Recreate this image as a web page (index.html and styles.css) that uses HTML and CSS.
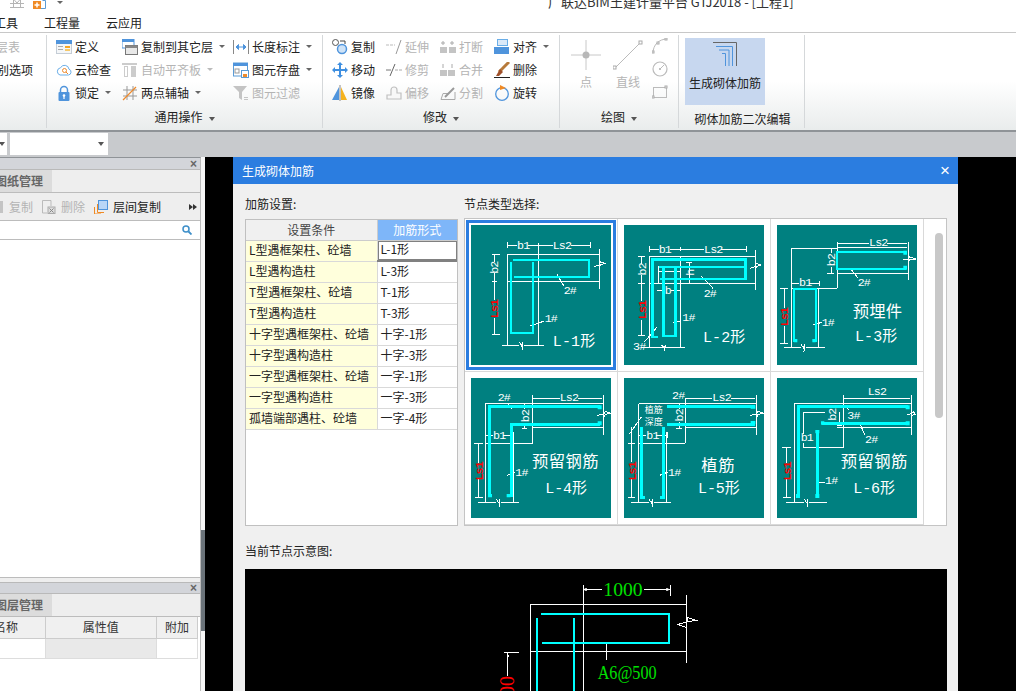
FILE: index.html
```html
<!DOCTYPE html>
<html lang="zh">
<head>
<meta charset="utf-8">
<title>生成砌体加筋</title>
<link rel="stylesheet" href="styles.css">
</head>
<body>
<div class="app">
  <header class="titlebar">
    <svg class="qa qa1" width="14" height="10" viewBox="0 0 14 10"><path d="M0,.5H14M0,4.5H14M0,8.5H14M3.500,0V9M10.500,0V9M3.500,0L7,4L10.500,0" fill="none" stroke="#b5b5b5"/></svg>
    <svg class="qa qa2" width="14" height="10" viewBox="0 0 14 10"><rect x="0" y="1" width="8" height="8" fill="#f08a24"/><path d="M4,2.500V7.500M1.500,5H6.500" stroke="#fff" stroke-width="1.500"/><path d="M9.500,0.500H12.500V8.500H8" fill="none" stroke="#5b9bd5"/></svg>
    <span class="caret qa3"></span>
    <span class="apptitle">广联达BIM土建计量平台 GTJ2018 - [工程1]</span>
  </header>
  <nav class="tabs"><span>工具</span><span>工程量</span><span>云应用</span></nav>

  <section class="ribbon">
    <div class="group g1">
      <div class="clipcol">
        <span class="off">层表</span>
        <span>别选项</span>
        <span>&nbsp;</span>
      </div>
    </div>

    <div class="group g2">
      <div class="cols">
        <div class="col w66">
          <div class="it"><svg class="ic" viewBox="0 0 16 16"><rect x=".5" y="1.500" width="15" height="13" fill="#f4f6f8" stroke="#c5cdd6"/><rect y="1" width="16" height="4" fill="#4f94dc"/><rect x="2" y="7" width="5" height="1" fill="#aaa"/><rect x="2" y="10" width="5" height="1" fill="#aaa"/><rect x="9" y="7" width="5" height="2" fill="#f5a623"/><rect x="9" y="10" width="5" height="2" fill="#f5c86a"/></svg><span>定义</span></div>
          <div class="it"><svg class="ic" viewBox="0 0 16 16"><path d="M4,13H12.500A3,3 0 0 0 13,7.200A4.500,4.500 0 0 0 4.500,5.800A3.700,3.700 0 0 0 4,13Z" fill="#fff" stroke="#6aaee8"/><circle cx="8.500" cy="8.500" r="2" fill="none" stroke="#ee8a2c"/><path d="M10,10L12,12" stroke="#ee8a2c"/></svg><span>云检查</span></div>
          <div class="it"><svg class="ic" viewBox="0 0 16 16"><path d="M4.500,8V5A3.500,3.500 0 0 1 11.500,5V8" fill="none" stroke="#4f94dc" stroke-width="1.500"/><rect x="2.500" y="7" width="11" height="9" rx="1" fill="#4f94dc"/><circle cx="8" cy="10.500" r="1.300" fill="#fff"/><rect x="7.400" y="11" width="1.200" height="3" fill="#fff"/></svg><span>锁定</span><span class="caret"></span></div>
        </div>
        <div class="col w111">
          <div class="it"><svg class="ic" viewBox="0 0 16 16"><rect y="0" width="12" height="9" fill="#fff" stroke="#4f94dc"/><rect y="0" width="12" height="3" fill="#4f94dc"/><rect x="3.500" y="6.500" width="12" height="9" fill="#e8e8e8" stroke="#777"/><rect x="3.500" y="6.500" width="12" height="2.500" fill="#888"/></svg><span>复制到其它层</span><span class="caret"></span></div>
          <div class="it off"><svg class="ic" viewBox="0 0 16 16"><rect x="0" y="1" width="15" height="2" fill="#ccc"/><rect x="2.500" y="4.500" width="3" height="10" fill="#fff" stroke="#ccc"/><rect x="9" y="4" width="5" height="11" fill="#ccc"/></svg><span>自动平齐板</span><span class="caret lite"></span></div>
          <div class="it"><svg class="ic" viewBox="0 0 16 16"><path d="M5,1V15M11,1V15M1,5H15M1,11H15" stroke="#999" fill="none"/><path d="M1,15L14,2" stroke="#ee8a2c" stroke-width="1.200"/></svg><span>两点辅轴</span><span class="caret"></span></div>
        </div>
        <div class="col">
          <div class="it"><svg class="ic" viewBox="0 0 16 16"><path d="M.5,1V15M15.500,1V15" stroke="#888"/><path d="M3,8H13M3,8L5.500,5.500V10.500ZM13,8L10.500,5.500V10.500Z" stroke="#4f94dc" fill="#4f94dc"/></svg><span>长度标注</span><span class="caret"></span></div>
          <div class="it"><svg class="ic" viewBox="0 0 16 16"><rect x=".5" y="1" width="14" height="13" fill="#fff" stroke="#5b9bd5"/><rect y="1" width="15" height="3" fill="#4f94dc"/><rect x="2" y="7" width="4" height="4" fill="none" stroke="#999"/><rect x="8.500" y="8.500" width="7" height="7" fill="#fff" stroke="#5b9bd5"/><rect x="10" y="12" width="4" height="3" fill="#ee8a2c"/></svg><span>图元存盘</span><span class="caret"></span></div>
          <div class="it off"><svg class="ic" viewBox="0 0 16 16"><path d="M0,1H14L9,7V15L6,13V7Z" fill="#c4c4c4"/><rect x="11" y="12" width="4" height="1" fill="#c4c4c4"/><rect x="11" y="14" width="4" height="1" fill="#c4c4c4"/></svg><span>图元过滤</span></div>
        </div>
      </div>
      <div class="glabel"><span>通用操作</span><span class="caret dark"></span></div>
    </div>

    <div class="group g3">
      <div class="cols">
        <div class="col w54">
          <div class="it"><svg class="ic" viewBox="0 0 16 16"><circle cx="3.500" cy="3.500" r="3" fill="#fff" stroke="#555"/><circle cx="10" cy="10" r="4.500" fill="#cfe3f7" stroke="#4f94dc" stroke-width="1.500"/><path d="M8,2H13V5" fill="none" stroke="#444"/></svg><span>复制</span></div>
          <div class="it"><svg class="ic" viewBox="0 0 16 16"><path d="M8,0L11,3H9V7H13V5L16,8L13,11V9H9V13H11L8,16L5,13H7V9H3V11L0,8L3,5V7H7V3H5Z" fill="#3f8fe0"/></svg><span>移动</span></div>
          <div class="it"><svg class="ic" viewBox="0 0 16 16"><path d="M7,2V15H0Z" fill="#4f94dc"/><path d="M9,2V15H15Z" fill="#f5b21e"/><path d="M8,0V16" stroke="#888"/></svg><span>镜像</span></div>
        </div>
        <div class="col w54 off">
          <div class="it"><svg class="ic" viewBox="0 0 16 16"><path d="M0,6H9" stroke="#bbb" stroke-dasharray="3 1"/><path d="M15,1L10,15" stroke="#999"/></svg><span>延伸</span></div>
          <div class="it"><svg class="ic" viewBox="0 0 16 16"><path d="M0,8H5" stroke="#777"/><path d="M9,8H16" stroke="#aaa" stroke-dasharray="3 1"/><path d="M9,2L4,14" stroke="#666"/></svg><span>修剪</span></div>
          <div class="it"><svg class="ic" viewBox="0 0 16 16"><path d="M1,14V10H5V5A3,3 0 0 1 11,5V8H15V14Z" fill="#f8f8f8" stroke="#c0c0c0" stroke-width="1.200"/></svg><span>偏移</span></div>
        </div>
        <div class="col w54 off">
          <div class="it"><svg class="ic" viewBox="0 0 16 16"><rect x="0" y="8" width="7" height="6" fill="#c4c4c4"/><rect x="9" y="8" width="7" height="6" fill="#c4c4c4"/><path d="M3,2V6M1,4H5M12,2V6M10,4H14" stroke="#aaa"/></svg><span>打断</span></div>
          <div class="it"><svg class="ic" viewBox="0 0 16 16"><rect x="0" y="8" width="7" height="6" fill="#c4c4c4"/><rect x="8" y="8" width="7" height="6" fill="#c4c4c4"/><path d="M3,2V6M12,2V6" stroke="#aaa"/></svg><span>合并</span></div>
          <div class="it"><svg class="ic" viewBox="0 0 16 16"><path d="M1,14.500H15V7M1,14.500L3,8.500H9" fill="none" stroke="#aaa"/><path d="M5,12L14,3" stroke="#999" stroke-width="2"/></svg><span>分割</span></div>
        </div>
        <div class="col">
          <div class="it"><svg class="ic" viewBox="0 0 16 16"><rect x="3.500" y=".5" width="10" height="6" fill="#dbe9f8" stroke="#6aaee8"/><rect x="0" y="8" width="15" height="7" fill="#4f94dc"/></svg><span>对齐</span><span class="caret"></span></div>
          <div class="it"><svg class="ic" viewBox="0 0 16 16"><path d="M15,0L5,10" stroke="#b77a3a" stroke-width="3"/><path d="M6,7L9,10L5,14H2Z" fill="#a0502a"/><path d="M0,15.500H16" stroke="#222"/></svg><span>删除</span></div>
          <div class="it"><svg class="ic" viewBox="0 0 16 16"><circle cx="8" cy="9" r="6.300" fill="none" stroke="#4f94dc" stroke-width="1.300"/><path d="M6,0L12,3L6,5Z" fill="#f08a24"/></svg><span>旋转</span></div>
        </div>
      </div>
      <div class="glabel"><span>修改</span><span class="caret dark"></span></div>
    </div>

    <div class="group g4">
      <div class="draw">
        <div class="bigtool">
          <svg width="30" height="30" viewBox="0 0 30 30"><path d="M15,0V30M0,15H30" stroke="#c8c8c8"/><circle cx="15" cy="15" r="3.500" fill="#b8b8b8"/></svg>
          <span>点</span>
        </div>
        <div class="bigtool">
          <svg width="30" height="30" viewBox="0 0 30 30"><path d="M2,28L28,2" stroke="#bbb"/><rect x="0" y="26" width="3" height="3" fill="#fff" stroke="#aaa"/><rect x="26" y="1" width="3" height="3" fill="#fff" stroke="#aaa"/></svg>
          <span>直线</span>
        </div>
        <div class="small3">
          <svg width="16" height="16" viewBox="0 0 16 16"><path d="M1,15C1,7 7,1 15,1" fill="none" stroke="#bbb"/><rect x="0" y="13" width="2" height="2" fill="#fff" stroke="#aaa"/><rect x="5" y="4" width="2" height="2" fill="#fff" stroke="#aaa"/><rect x="13" y="0" width="2" height="2" fill="#fff" stroke="#aaa"/></svg>
          <svg width="16" height="16" viewBox="0 0 16 16"><circle cx="8" cy="8" r="7" fill="none" stroke="#bbb" stroke-width="1.200"/><circle cx="8" cy="8" r="1" fill="#aaa"/><path d="M8,8L12,4" stroke="#bbb"/></svg>
          <svg width="16" height="16" viewBox="0 0 16 16"><rect x="1.500" y="3.500" width="13" height="10" fill="none" stroke="#bbb"/><rect x="0" y="12" width="2" height="2" fill="#fff" stroke="#aaa"/><rect x="13" y="2" width="2" height="2" fill="#fff" stroke="#aaa"/></svg>
        </div>
      </div>
      <div class="glabel"><span>绘图</span><span class="caret dark"></span></div>
    </div>

    <div class="group g5">
      <div class="bigsel">
        <svg width="24" height="24" viewBox="0 0 24 24"><path d="M0,.5H23.500V24" fill="none" stroke="#666"/><path d="M3,4.500H19.500V24M6,8H16V24M9,11.500H12.500V24" fill="none" stroke="#4f94dc"/></svg>
        <span>生成砌体加筋</span>
      </div>
      <div class="glabel g5l"><span>砌体加筋二次编辑</span></div>
    </div>
  </section>

  <div class="toolbar">
    <div class="combo c1"><span class="caret dark"></span></div>
    <div class="combo c2"><span class="caret dark"></span></div>
  </div>

  <main class="main">
    <aside class="leftpane">
      <div class="phead"><span class="px">×</span></div>
      <div class="ptabs"><span class="ptab"><span>图纸管理</span></span></div>
      <div class="ptools">
        <span class="stub"></span>
        <span class="tool off">复制</span>
        <span class="tool off"><svg class="ic14" viewBox="0 0 14 14"><path d="M.5,.5H9V6M.5,.5V13H5" fill="none" stroke="#bbb"/><rect x="6" y="7" width="7" height="6.500" fill="#ddd" stroke="#aaa"/><path d="M7.500,8.500L11.500,12.500M11.500,8.500L7.500,12.500" stroke="#888"/></svg>删除</span>
        <span class="tool"><svg class="ic14" viewBox="0 0 14 14"><path d="M3.500,4V12.500H10M.5,7V14H7" fill="none" stroke="#f08a24"/><rect x="4.500" y=".5" width="9" height="9" fill="#b9d6f7" stroke="#4f94dc"/></svg>层间复制</span>
        <svg class="more" width="8" height="6" viewBox="0 0 8 6"><path d="M0,0L4,3L0,6ZM4,0L8,3L4,6Z" fill="#333"/></svg>
      </div>
      <div class="psearch"><svg width="10" height="10" viewBox="0 0 10 10"><circle cx="4" cy="4" r="3" fill="none" stroke="#3e8fc9" stroke-width="1.500"/><path d="M6.500,6.500L9.500,9.500" stroke="#3e8fc9" stroke-width="1.800"/></svg></div>
      <div class="plist"></div>
      <div class="pgap"></div>
      <div class="phead h2"><span class="px">×</span></div>
      <div class="ptabs"><span class="ptab"><span>图层管理</span></span></div>
      <table class="ltable">
        <tr><th class="lc1"><span class="clipname">名称</span></th><th class="lc2">属性值</th><th class="lc3">附加</th></tr>
        <tr><td></td><td class="shade"></td><td></td></tr>
      </table>
      <div class="prest"></div>
    </aside>
    <div class="splitter"><div class="handle"></div></div>
    <div class="canvas">
      <section class="dialog">
        <div class="dtitle"><span>生成砌体加筋</span><span class="dx">×</span></div>
        <div class="dbody">
          <div class="dtop">
            <div class="dleft">
              <div class="lbl">加筋设置:</div>
              <div class="tablebox">
                <table class="rtable">
                  <tr><th>设置条件</th><th class="hl">加筋形式</th></tr>
                  <tr><td>L型遇框架柱、砼墙</td><td class="cur">L-1形</td></tr>
                  <tr><td>L型遇构造柱</td><td>L-3形</td></tr>
                  <tr><td>T型遇框架柱、砼墙</td><td>T-1形</td></tr>
                  <tr><td>T型遇构造柱</td><td>T-3形</td></tr>
                  <tr><td>十字型遇框架柱、砼墙</td><td>十字-1形</td></tr>
                  <tr><td>十字型遇构造柱</td><td>十字-3形</td></tr>
                  <tr><td>一字型遇框架柱、砼墙</td><td>一字-1形</td></tr>
                  <tr><td>一字型遇构造柱</td><td>一字-3形</td></tr>
                  <tr><td>孤墙端部遇柱、砼墙</td><td>一字-4形</td></tr>
                </table>
              </div>
            </div>
            <div class="dright">
              <div class="lbl lr">节点类型选择:</div>
              <div class="nodes">
                <div class="ngrid">
                  <div class="cell">
                    <svg class="thumb sel" viewBox="27 30 420 420">
                      <path class="w" d="M136,118V391M136,118H412M230,85V391M90,200H105M136,200H412M412,103V222M120,391H172M185,391H245M136,82V100M136,91H165M197,91H272M327,91H385M385,82V100M97,118V142M90,118H115M97,175V255M97,310V358M90,358H115M397,155L412,150L415,140L430,145L415,150L412,160M172,381L178,392L182,380L180,405M285,178L305,212M205,333L247,318"/>
                      <path class="c" d="M153,135H381V185H157M214,142V355H148V142"/>
                      <text class="t" x="165" y="103">b1</text><text class="t" x="272" y="103">Ls2</text>
                      <text class="t" transform="translate(109,158) rotate(-90)" text-anchor="middle">b2</text>
                      <text class="r" transform="translate(109,282) rotate(-90)" text-anchor="middle">Ls1</text>
                      <text class="t" x="305" y="238">2#</text><text class="t" x="248" y="322">1#</text>
                      <text class="n" x="272" y="394" textLength="128">L-1形</text>
                    </svg>
                  </div>
                  <div class="cell">
                    <svg class="thumb" viewBox="18 30 420 420">
                      <path class="w" d="M95,124H412M95,124V397M188,124V397M95,205H412M412,105V225M70,397H200M95,94V112M95,103H122M155,103H258M310,103H385M385,94V112M188,97V109M71,124V147M60,124H82M71,180V258M60,205H82M71,315V360M60,360H82M214,142V205M205,142H222M118,225H135M160,225H188M120,152V205M120,168H188M397,160L412,155L415,145L430,150L415,155L412,165M130,390L138,398L142,390L140,408M250,183L285,220M165,323L190,318M80,380L118,335"/>
                      <path class="c7" d="M120,365H103V133H382V192H125M122,155H382M136,152V362H172V152"/>
                      <text class="t" x="122" y="115">b1</text><text class="t" x="258" y="115">Ls2</text>
                      <text class="t" transform="translate(83,163) rotate(-90)" text-anchor="middle">b2</text>
                      <text class="r" transform="translate(83,285) rotate(-90)" text-anchor="middle">Ls1</text>
                      <text class="t" transform="translate(228,173) rotate(-90)" text-anchor="middle">h</text>
                      <text class="t" x="140" y="237">b</text>
                      <text class="t" x="257" y="246">2#</text><text class="t" x="193" y="318">1#</text><text class="t" x="45" y="404">3#</text>
                      <text class="n" x="255" y="380" textLength="127">L-2形</text>
                    </svg>
                  </div>
                  <div class="cell">
                    <svg class="thumb" viewBox="21 30 420 420">
                      <path class="w" d="M65,100H202M65,100V397M65,220H202M202,80V220M145,220V397M43,397H93M108,397H165M202,175H415M202,97H410M415,80V195M202,85H297M350,85H412M65,205H87M118,205H147M147,197V214M65,197V214M42,220V280M42,332V385M30,220H55M30,385H55M183,100V115M183,155V175M172,175H192M400,135L415,132L418,125L437,132L418,135L415,145M93,388L100,398L104,388L102,410M245,165L265,190M130,330L155,322"/>
                      <path class="c" d="M72,380V223H137V380M408,110H202V162H408"/>
                      <path class="e" d="M72,372h10v10h-10zM127,372h10v10h-10zM400,107h11v12h-11zM400,152h11v12h-11z"/>
                      <text class="t" x="87" y="212">b1</text><text class="t" x="297" y="94">Ls2</text>
                      <text class="t" transform="translate(195,135) rotate(-90)" text-anchor="middle">b2</text>
                      <text class="r" transform="translate(54,306) rotate(-90)" text-anchor="middle">Ls1</text>
                      <text class="t" x="263" y="214">2#</text><text class="t" x="155" y="333">1#</text>
                      <text class="n2" x="248" y="307" textLength="148">预埋件</text>
                      <text class="n" x="255" y="378" textLength="127">L-3形</text>
                    </svg>
                  </div>
                  <div class="cell">
                    <svg class="thumb" viewBox="27 18 420 420">
                      <path class="w" d="M70,95H425M70,95V390M212,70V213M70,213H212M155,190V390M212,167H425M425,70V190M48,391H103M117,391H172M212,78H293M347,78H420M135,92L148,110M70,190H93M123,190H155M155,181V199M50,213V272M50,322V375M35,213H62M38,375H62M188,95V110M188,152V168M180,168H196M405,130L425,127L430,118L445,124L430,127L425,138M103,382L110,392L114,382L112,405M135,310L160,300"/>
                      <path class="c9" d="M82,375V102H415M148,375V157H415"/>
                      <path class="e" d="M78,366h12v10h-12zM134,366h12v10h-12zM407,100h12v12h-12zM407,148h12v12h-12z"/>
                      <text class="t" x="107" y="87">2#</text><text class="t" x="293" y="87">Ls2</text><text class="t" x="93" y="202">b1</text>
                      <text class="t" transform="translate(200,132) rotate(-90)" text-anchor="middle">b2</text>
                      <text class="r" transform="translate(62,298) rotate(-90)" text-anchor="middle">Ls1</text>
                      <text class="t" x="160" y="313">1#</text>
                      <text class="n2" x="210" y="284" textLength="200">预留钢筋</text>
                      <text class="n" x="250" y="364" textLength="125">L-4形</text>
                    </svg>
                  </div>
                  <div class="cell">
                    <svg class="thumb" viewBox="18 18 420 420">
                      <path class="w" d="M62,95H415M62,95V390M202,78V213M62,213H202M145,180V390M202,167H415M415,70V190M40,390H93M108,390H160M202,78H283M338,78H412M62,190H85M115,190H147M147,181V199M40,165V270M40,322V375M30,213H50M30,375H50M35,185L70,135M183,95V110M183,150V168M175,168H192M395,130L415,127L420,118L437,124L420,127L415,138M93,382L100,392L104,382L102,405M125,310L150,300"/>
                      <path class="c9" d="M148,102H412M148,156H412M70,165V375H80M136,165V375H125"/>
                      <path class="e" d="M398,100h14v10h-14zM398,147h14v10h-14z"/>
                      <text class="t" x="162" y="82">2#</text><text class="t" x="283" y="88">Ls2</text><text class="t" x="85" y="202">b1</text>
                      <text class="t" transform="translate(195,130) rotate(-90)" text-anchor="middle">b2</text>
                      <text class="r" transform="translate(54,298) rotate(-90)" text-anchor="middle">Ls1</text>
                      <text class="t" x="150" y="313">1#</text>
                      <text class="s" x="80" y="124">植筋</text><text class="s" x="80" y="158">深度</text>
                      <text class="n2" x="250" y="297" textLength="100">植筋</text>
                      <text class="n" x="240" y="364" textLength="125">L-5形</text>
                    </svg>
                  </div>
                  <div class="cell">
                    <svg class="thumb" viewBox="21 18 420 420">
                      <path class="w" d="M73,95H425M73,95V390M220,70V227M100,227H220M202,167H425M425,70V190M100,120V185M100,212V227M100,120H165M207,120V160M200,160H215M48,391H103M117,391H170M220,78H420M228,100L237,115M272,160L285,190M148,330H165M50,227V272M50,322V375M35,227H62M38,375H62M410,128L425,125L430,118L435,127L425,130M103,382L110,392L114,382L112,405"/>
                      <path class="c9" d="M84,375V102H415M142,178V375M155,153H415"/>
                      <path class="e" d="M78,366h12v12h-12zM136,366h12v12h-12zM136,174h12v10h-12zM153,148h10v10h-10zM407,100h12v12h-12zM407,148h12v12h-12z"/>
                      <text class="t" x="293" y="70">Ls2</text><text class="t" x="92" y="208">b1</text>
                      <text class="t" transform="translate(197,128) rotate(-90)" text-anchor="middle">b2</text>
                      <text class="r" transform="translate(62,298) rotate(-90)" text-anchor="middle">Ls1</text>
                      <text class="t" x="232" y="140">3#</text><text class="t" x="285" y="214">2#</text><text class="t" x="165" y="335">1#</text>
                      <text class="n2" x="212" y="284" textLength="200">预留钢筋</text>
                      <text class="n" x="250" y="364" textLength="125">L-6形</text>
                    </svg>
                  </div>
                </div>
                <div class="scrollcol"><div class="thumbbar"></div></div>
              </div>
            </div>
          </div>
          <div class="lbl lcur">当前节点示意图:</div>
          <svg class="preview" viewBox="-555 87 2106 366">
            <path class="bw" d="M300,192H769M301,192V453M460,135V453M302,333H769M769,165V368M460,148H516M642,148H720M720,135V167M529,310V360M232,337V408M222,337H267M742,253L769,262L772,232L797,241L769,246L745,253"/>
            <path class="e2" d="M464,145h7v7h-7zM708,145h7v7h-7zM231,345h6v6h-6z"/>
            <path class="bc" d="M333,222H717V309H336M321,235V453M432,235V453"/>
            <text class="g" x="520" y="168" textLength="118" lengthAdjust="spacingAndGlyphs">1000</text>
            <text class="g" x="503" y="416" textLength="177" lengthAdjust="spacingAndGlyphs">A6@500</text>
            <text class="gr" transform="translate(253,408) rotate(-90)" text-anchor="end">1000</text>
          </svg>
        </div>
      </section>
    </div>
  </main>
</div>
</body>
</html>
```

FILE: styles.css
```css
* { box-sizing: border-box; }
html, body { margin: 0; padding: 0; }
body {
  width: 1016px; height: 691px; overflow: hidden;
  font: 12px/16px "Noto Sans CJK SC", "Liberation Sans", sans-serif;
  color: #222; background: #fff;
}
.app { width: 1016px; height: 691px; display: flex; flex-direction: column; overflow: hidden; }
.off { color: #b4b4b4; }

.caret { display: inline-block; width: 0; height: 0; border: 3px solid transparent; border-top: 3px solid #666; border-bottom: 0; margin-left: 6px; vertical-align: middle; }
.caret.lite { border-top-color: #bbb; }
.caret.dark { border-left-width: 3.500px; border-right-width: 3.500px; border-top: 4px solid #555; }

.titlebar { height: 15px; flex: none; display: flex; align-items: flex-start; position: relative; overflow: hidden; padding-left: 10px; }
.qa { flex: none; display: block; }
.qa1 { margin-right: 9px; margin-top: -1px; }
.qa2 { margin-right: 7px; }
.qa3 { margin: 1px 0 0 3px; }
.apptitle { font-size: 13px; line-height: 16px; margin-top: -6px; margin-left: 485px; white-space: nowrap; color: #333; }

.tabs { height: 18px; flex: none; display: flex; gap: 26px; margin-left: -6px; line-height: 16px; border-bottom: 1px solid #c8c8c8; }

.ribbon { height: 99px; flex: none; display: flex; background: linear-gradient(#fff 50%, #e9ecec); border-bottom: 2px solid #8f9397; }
.group { position: relative; display: flex; flex-direction: column; border-right: 1px solid #d5d8da; height: 93px; margin-top: 2px; flex: none; }
.g1 { width: 47px; overflow: hidden; }
.g2 { width: 276px; padding: 0 0 0 9px; }
.g3 { width: 237px; padding: 0 0 0 9px; }
.g4 { width: 119px; }
.g5 { width: 126px; }
.clipcol { display: flex; flex-direction: column; align-items: flex-start; padding: 0; margin-left: -3px; }
.clipcol span { height: 23px; line-height: 23px; white-space: nowrap; }
.clipcol .off { margin-left: -1px; }
.cols { display: flex; height: 70px; }
.col { display: flex; flex-direction: column; flex: none; }
.w66 { width: 66px; } .w111 { width: 111px; } .w54 { width: 54px; }
.it { display: flex; align-items: center; height: 23px; white-space: nowrap; }
.ic { width: 16px; height: 16px; flex: none; margin-right: 3px; display: block; }
.glabel { position: absolute; left: 0; right: 0; top: 74px; text-align: center; line-height: 16px; color: #222; }
.g5l { top: 76px; padding-left: 2px; }

.draw { display: flex; padding: 5px 0 0 5px; }
.bigtool { width: 42px; flex: none; display: flex; flex-direction: column; align-items: center; color: #b4b4b4; }
.bigtool svg { display: block; margin-bottom: 4px; }
.bigtool span { line-height: 16px; }
.small3 { display: flex; flex-direction: column; gap: 7px; margin: -2px 0 0 3px; }
.small3 svg { display: block; }

.bigsel { margin: 3px 0 0 6px; width: 80px; height: 67px; background: #c7d7ef; display: flex; flex-direction: column; align-items: center; padding-top: 4px; }
.bigsel svg { display: block; margin-bottom: 9px; }
.bigsel span { white-space: nowrap; line-height: 16px; }

.toolbar { height: 25px; flex: none; background: #c8cacd; display: flex; gap: 3px; padding-top: 1px; }
.combo { height: 22px; background: #fff; display: flex; align-items: center; justify-content: flex-end; padding-right: 4px; }
.combo .caret { margin: 0; }
.c1 { width: 7px; padding-right: 2px; }
.c2 { width: 98px; }

.main { height: 534px; flex: none; display: flex; }
.leftpane { width: 201px; flex: none; display: flex; flex-direction: column; border-right: 1px solid #bcbcbc; border-top: 1px solid #8f9397; background: #fff; }
.phead { height: 12px; flex: none; background: #d3d5da; border-bottom: 1px solid #b9b9b9; display: flex; justify-content: flex-end; align-items: center; padding-right: 3px; }
.h2 { height: 12px; border-top: 1px solid #b9b9b9; }
.px { color: #666; font: bold 12px/10px "Liberation Sans", sans-serif; }
.ptabs { height: 23px; flex: none; background: #eee; border-bottom: 1px solid #bcbcbc; display: flex; }
.ptab { width: 52px; background: #dcdcdc; overflow: hidden; color: #666; line-height: 22px; white-space: nowrap; font-weight: bold; }
.ptab span { display: block; margin-left: -5px; }
.ptools { height: 28px; flex: none; background: #eee; border-bottom: 1px solid #bcbcbc; display: flex; align-items: center; gap: 9px; padding-left: 0; white-space: nowrap; }
.stub { width: 3px; height: 12px; flex: none; margin-left: 0; margin-right: -3px; background: #c4c4c4; }
.tool { display: flex; align-items: center; gap: 5px; }
.ic14 { width: 14px; height: 14px; flex: none; display: block; }
.more { margin-left: auto; margin-right: 3px; flex: none; display: block; }
.psearch { height: 19px; flex: none; border-bottom: 1px solid #bcbcbc; display: flex; justify-content: flex-end; align-items: center; padding-right: 8px; }
.plist { height: 338px; flex: none; border-bottom: 1px solid #bcbcbc; }
.pgap { height: 4px; flex: none; background: #eee; }
.ltable { width: 198px; table-layout: fixed; border-collapse: collapse; flex: none; }
.ltable th { height: 21px; background: #f0f0f0; font-weight: normal; padding: 0; border: 1px solid #ccc; border-top: 0; color: #333; overflow: hidden; }
.ltable td { height: 20px; padding: 0; border: 1px solid #ddd; border-top: 0; }
.ltable .shade { background: #e9e9e9; }
.lc1 { width: 45px; } .lc3 { width: 41px; }
.ltable tr > :first-child { border-left: 0; }
.clipname { display: block; margin-left: -6px; text-align: left; white-space: nowrap; }
.prest { flex: 1; background: #fff; }

.splitter { width: 4px; flex: none; background: #f7f7f7; padding-top: 373px; }
.handle { height: 101px; background: #6b737a; }

.canvas { flex: 1; background: #000; position: relative; overflow: hidden; }
.dialog { position: absolute; left: 28px; top: 0; width: 725px; height: 534px; background: #f0f0f0; display: flex; flex-direction: column; }
.dtitle { height: 27px; flex: none; background: #2b7de0; color: #fff; display: flex; justify-content: space-between; align-items: center; padding: 0 8px 0 9px; }
.dx { font: 17px/16px "Liberation Sans", sans-serif; }
.dbody { padding: 12px 0 0 12px; flex: 1; display: flex; flex-direction: column; }
.dtop { display: flex; gap: 6px; }
.dleft { width: 213px; flex: none; }
.lbl { height: 16px; line-height: 16px; margin-bottom: 7px; }
.lr { margin-bottom: 6px; }
.tablebox { height: 307px; background: #fff; border: 1px solid #c0c0c0; }
.rtable { width: 100%; table-layout: fixed; border-collapse: collapse; }
.rtable th { height: 20px; padding: 0; font-weight: normal; background: #f0f0f0; color: #444; border-bottom: 1px solid #ccc; border-right: 1px solid #ccc; }
.rtable th:first-child { width: 131px; }
.rtable .hl { background: #7eb6f9; color: #fff; border-right: 0; }
.rtable td { height: 21px; padding: 0 0 2px 3px; border-bottom: 1px solid #d9d9d9; border-right: 1px solid #d9d9d9; background: #fff; white-space: nowrap; line-height: 16px; }
.rtable td:first-child { background: #ffffdc; }
.rtable td:last-child { border-right: 0; }
.rtable .cur { box-shadow: inset 0 0 0 1px #808080; border-right: 2px solid #808080; border-bottom: 2px solid #808080; }

.nodes { width: 483px; height: 308px; background: #fff; border: 1px solid #c4c4c4; display: flex; }
.ngrid { width: 459px; flex: none; display: grid; grid-template-columns: repeat(3, 153px); grid-auto-rows: 153px; }
.cell { padding: 6px; border-right: 1px solid #d9d9d9; border-bottom: 1px solid #d9d9d9; }
.thumb { width: 140px; height: 140px; display: block; background: #008080; }
.sel { outline: 3px solid #2b7de0; outline-offset: 2px; }
.scrollcol { flex: 1; padding: 14px 0 0 11px; }
.thumbbar { width: 8px; height: 185px; background: #c8c8c8; border-radius: 4px; }

.lcur { margin: 17px 0 10px; }
.preview { width: 702px; height: 122px; display: block; background: #000; flex: none; }

.w, .bw { fill: none; stroke: #fff; stroke-width: 3; }
.c, .bc { fill: none; stroke: #00ffff; stroke-width: 6; }
.c7 { fill: none; stroke: #00ffff; stroke-width: 7; }
.c9 { fill: none; stroke: #00ffff; stroke-width: 9; }
.e, .e2 { fill: #00ffff; stroke: none; }
.e2 { fill: #fff; }
.bw, .bc, .w, .c, .c7, .c9 { shape-rendering: crispEdges; }
.t, .r { font: 35px "Liberation Mono", "Noto Sans CJK SC", monospace; letter-spacing: -2.500px; fill: #fff; }
.r { fill: #f00; font-weight: bold; }
.s { font: 27px "Noto Sans CJK SC", sans-serif; fill: #fff; }
.n { font: 45px "Liberation Mono", "Noto Sans CJK SC", monospace; fill: #fff; }
.n2 { font: 49px "Noto Sans CJK SC", sans-serif; fill: #fff; }
.g { font: 59px "Liberation Serif", serif; fill: #00e000; }
.gr { font: 60px "Liberation Serif", serif; fill: #f00; }
```
